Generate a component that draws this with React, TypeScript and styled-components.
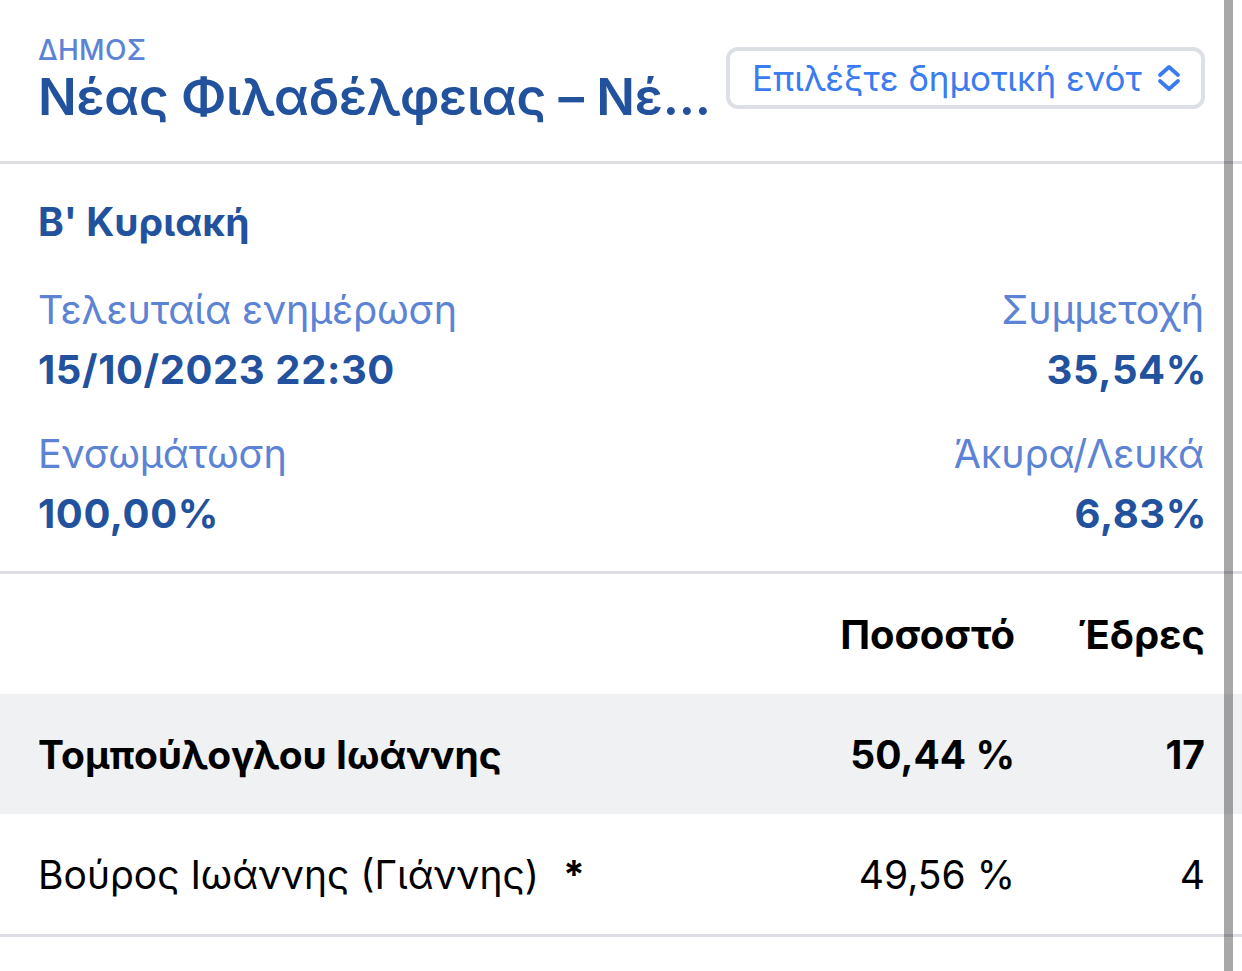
import React from 'react';
import styled, { createGlobalStyle } from 'styled-components';

const GlobalStyle = createGlobalStyle`
  html, body {
    margin: 0;
    padding: 0;
    background: #ffffff;
  }
  body {
    font-family: Inter, "Noto Sans", "Liberation Sans", sans-serif;
    -webkit-font-smoothing: antialiased;
  }
`;

const DARK = '#22519d';
const LIGHT = '#5c83d4';

type Stat = { label: string; value: string; right?: boolean };

const stats: Stat[] = [
  { label: 'Τελευταία ενημέρωση', value: '15/10/2023 22:30' },
  { label: 'Συμμετοχή', value: '35,54%', right: true },
  { label: 'Ενσωμάτωση', value: '100,00%' },
  { label: 'Άκυρα/Λευκά', value: '6,83%', right: true },
];

type Candidate = { name: string; pct: string; seats: string; winner?: boolean; mark?: string };

const candidates: Candidate[] = [
  { name: 'Τομπούλογλου Ιωάννης', pct: '50,44 %', seats: '17', winner: true },
  { name: 'Βούρος Ιωάννης (Γιάννης)', pct: '49,56 %', seats: '4', mark: '*' },
];

const App: React.FC = () => {
  return (
    <Page>
      <GlobalStyle />
      <Header>
        <TitleBlock>
          <Kicker>ΔΗΜΟΣ</Kicker>
          <Title>Νέας Φιλαδέλφειας – Νέ...</Title>
        </TitleBlock>
        <Select>
          <SelectText>Επιλέξτε δημοτική ενότ</SelectText>
          <svg width="28" height="32" viewBox="0 0 28 32" fill="none">
            <path d="M5 13 L14 5 L23 13" stroke="#3a7cf0" strokeWidth="3.8" strokeLinecap="round" strokeLinejoin="round" />
            <path d="M5 19 L14 27 L23 19" stroke="#3a7cf0" strokeWidth="3.8" strokeLinecap="round" strokeLinejoin="round" />
          </svg>
        </Select>
      </Header>

      <Summary>
        <Round>Β' Κυριακή</Round>
        <StatGrid>
          {stats.map((s) => (
            <StatItem key={s.label} $right={s.right}>
              <StatLabel>{s.label}</StatLabel>
              <StatValue>{s.value}</StatValue>
            </StatItem>
          ))}
        </StatGrid>
      </Summary>

      <Table>
        <HeadRow>
          <NameCell />
          <PctCell>Ποσοστό</PctCell>
          <SeatCell>Έδρες</SeatCell>
        </HeadRow>
        {candidates.map((c) => (
          <Row key={c.name} $winner={c.winner}>
            <NameCell>
              {c.name}
              {c.mark && <Mark>{c.mark}</Mark>}
            </NameCell>
            <PctCell>{c.pct}</PctCell>
            <SeatCell>{c.seats}</SeatCell>
          </Row>
        ))}
      </Table>

      <ScrollThumb />
    </Page>
  );
};

export default App;

const Page = styled.div`
  position: relative;
  width: 1242px;
  height: 971px;
  overflow: hidden;
  background: #ffffff;
`;

const Header = styled.header`
  display: flex;
  align-items: flex-start;
  justify-content: space-between;
  padding: 34px 37px 0 38px;
  height: 164px;
  box-sizing: border-box;
  border-bottom: 3px solid #dcdee3;
`;

const TitleBlock = styled.div`
  display: flex;
  flex-direction: column;
`;

const Kicker = styled.div`
  font-size: 28px;
  line-height: 32px;
  font-weight: 500;
  color: ${LIGHT};
  letter-spacing: 0.3px;
`;

const Title = styled.div`
  font-size: 51px;
  line-height: 62px;
  font-weight: 600;
  color: ${DARK};
  letter-spacing: -0.25px;
  white-space: nowrap;
`;

const Select = styled.div`
  display: flex;
  align-items: center;
  justify-content: space-between;
  width: 479px;
  height: 62px;
  margin-top: 13px;
  box-sizing: border-box;
  padding: 0 18px 0 22px;
  border: 4px solid #dcdfe4;
  border-radius: 12px;
`;

const SelectText = styled.span`
  font-size: 35px;
  color: #3a7cf0;
  white-space: nowrap;
`;

const Summary = styled.section`
  padding: 34px 38px 0 38px;
  height: 410px;
  box-sizing: border-box;
  border-bottom: 3px solid #dcdee3;
`;

const Round = styled.div`
  font-size: 39px;
  line-height: 48px;
  font-weight: 700;
  color: ${DARK};
`;

const StatGrid = styled.div`
  display: grid;
  grid-template-columns: 1fr 1fr;
  row-gap: 24px;
  margin-top: 34px;
`;

const StatItem = styled.div<{ $right?: boolean }>`
  display: flex;
  flex-direction: column;
  align-items: ${(p) => (p.$right ? 'flex-end' : 'flex-start')};
`;

const StatLabel = styled.div`
  font-size: 39.5px;
  line-height: 60px;
  font-weight: 400;
  color: ${LIGHT};
  letter-spacing: -0.2px;
`;

const StatValue = styled.div`
  font-size: 40px;
  line-height: 60px;
  font-weight: 700;
  color: ${DARK};
  letter-spacing: 0.6px;
  margin-right: -3px;
`;

const Table = styled.div`
  display: flex;
  flex-direction: column;
  border-bottom: 3px solid #dcdee3;
`;

const HeadRow = styled.div`
  display: grid;
  grid-template-columns: 1fr 300px 192px;
  align-items: center;
  height: 120px;
  padding: 0 37px 0 38px;
  font-size: 40px;
  font-weight: 700;
  color: #000000;
`;

const Row = styled.div<{ $winner?: boolean }>`
  display: grid;
  grid-template-columns: 1fr 300px 192px;
  align-items: center;
  height: 120px;
  padding: 0 37px 0 38px;
  font-size: 39px;
  font-weight: ${(p) => (p.$winner ? 700 : 400)};
  color: #000000;
  background: ${(p) => (p.$winner ? '#f0f1f3' : '#ffffff')};
`;

const NameCell = styled.div`
  white-space: nowrap;
`;

const Mark = styled.span`
  margin-left: 24px;
  font-weight: 700;
`;

const PctCell = styled.div`
  text-align: right;
  white-space: nowrap;
  margin-right: -2px;
`;

const SeatCell = styled.div`
  text-align: right;
`;

const ScrollThumb = styled.div`
  position: absolute;
  top: 0;
  bottom: 0;
  left: 1224px;
  width: 9px;
  background: rgba(0, 0, 0, 0.34);
`;
